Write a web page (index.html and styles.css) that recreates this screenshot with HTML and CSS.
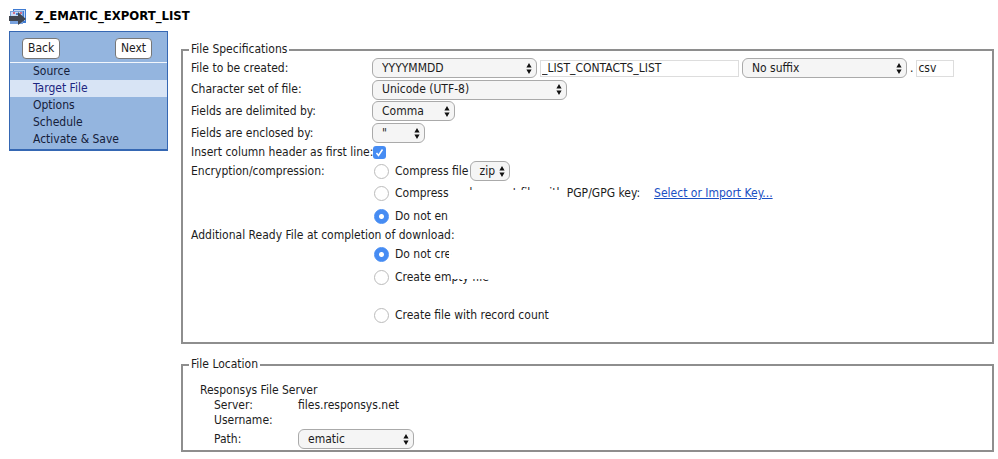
FILE: index.html
```html
<!DOCTYPE html>
<html lang="en">
<head>
<meta charset="utf-8">
<title>Z_EMATIC_EXPORT_LIST</title>
<link rel="stylesheet" href="styles.css">
</head>
<body>
<header class="title-bar">
  <svg class="title-icon" width="18" height="18" viewBox="0 0 18 18" aria-hidden="true">
    <path d="M4 2h13v14H4z" fill="#3f7bd2"/>
    <path d="M1 4h13v13H1z" fill="#79a3e0"/>
    <path d="M2 5h11v5H2z" fill="#c9dbf5"/>
    <path d="M5 3h10v1H5zM15 3h1v11h-1z" fill="#c4d8f5"/>
    <path d="M4 5h2v2H4zM11 5h2v2h-2z" fill="#d0708c"/>
    <path d="M7 6h2v2H7z" fill="#477fd0"/>
    <path d="M0 9h9V5l8 7-8 6v-4H0z" fill="#414650"/>
  </svg>
  <h1 class="title">Z_EMATIC_EXPORT_LIST</h1>
</header>
<div class="layout">
  <nav class="wizard">
    <div class="wizard-buttons">
      <button class="button" type="button">Back</button>
      <button class="button" type="button">Next</button>
    </div>
    <ul class="steps">
      <li><a class="step" href="#source">Source</a></li>
      <li><a class="step step-current" href="#target" aria-current="step">Target File</a></li>
      <li><a class="step" href="#options">Options</a></li>
      <li><a class="step" href="#schedule">Schedule</a></li>
      <li><a class="step" href="#activate">Activate &amp; Save</a></li>
    </ul>
  </nav>
  <form class="panels">
    <fieldset class="panel specs">
      <legend>File Specifications</legend>
      <div class="row">
        <label class="name" for="prefix">File to be created:</label>
        <div class="filename">
          <select class="select select-wide" id="prefix"><option>YYYYMMDD</option></select>
          <input class="text text-name" type="text" aria-label="File name" value="_LIST_CONTACTS_LIST">
          <select class="select select-wide" aria-label="Suffix"><option>No suffix</option></select>
          <span>.</span>
          <input class="text text-ext" type="text" aria-label="Extension" value="csv">
        </div>
      </div>
      <div class="row row-short">
        <label class="name" for="charset">Character set of file:</label>
        <select class="select select-charset" id="charset"><option>Unicode (UTF-8)</option></select>
      </div>
      <div class="row">
        <label class="name" for="delimiter">Fields are delimited by:</label>
        <select class="select select-delimiter" id="delimiter"><option>Comma</option></select>
      </div>
      <div class="row">
        <label class="name" for="enclosure">Fields are enclosed by:</label>
        <select class="select select-enclosure" id="enclosure"><option>"</option></select>
      </div>
      <div class="row row-check">
        <label class="name" for="header-row">Insert column header as first line:</label>
        <input class="check" type="checkbox" id="header-row" checked>
      </div>
      <div class="row">
        <span class="name">Encryption/compression:</span>
        <div class="choice">
          <input class="radio" type="radio" name="enc" id="enc-zip">
          <label for="enc-zip">Compress file</label>
          <select class="select select-zip" aria-label="Compression format"><option>zip</option></select>
        </div>
      </div>
      <div class="choice choice-row">
        <input class="radio" type="radio" name="enc" id="enc-pgp">
        <label for="enc-pgp">Compress<span class="masked masked-bottom"> and encrypt file with</span> PGP/GPG key:</label>
        <a class="key-link" href="#key">Select or Import Key...</a>
      </div>
      <div class="choice choice-row">
        <input class="radio" type="radio" name="enc" id="enc-none" checked>
        <label for="enc-none">Do not en</label>
      </div>
      <div class="subhead">Additional Ready File at completion of download:</div>
      <div class="choice choice-row">
        <input class="radio" type="radio" name="ready" id="ready-none" checked>
        <label for="ready-none">Do not cr<span class="masked masked-right">e</span></label>
      </div>
      <div class="choice choice-row">
        <input class="radio" type="radio" name="ready" id="ready-empty">
        <label for="ready-empty">Create em<span class="masked masked-top">pty file</span></label>
      </div>
      <div class="choice choice-row choice-last">
        <input class="radio" type="radio" name="ready" id="ready-count">
        <label for="ready-count">Create file with record count</label>
      </div>
    </fieldset>
    <fieldset class="panel location">
      <legend>File Location</legend>
      <div class="server-title">Responsys File Server</div>
      <dl class="server">
        <dt>Server:</dt><dd>files.responsys.net</dd>
        <dt>Username:</dt><dd></dd>
        <dt class="path-cell"><label for="path">Path:</label></dt>
        <dd class="path-cell"><select class="select select-path" id="path"><option>ematic</option></select></dd>
      </dl>
    </fieldset>
  </form>
</div>
</body>
</html>
```
FILE: styles.css
```css
* {
  box-sizing: border-box;
}

body {
  margin: 0;
  padding: 7px 4px 0 9px;
  background: #fff;
  color: #1c1c1c;
  font: 12px/15px "DejaVu Sans Condensed", "DejaVu Sans", sans-serif;
}

button, input, select {
  margin: 0;
  color: inherit;
  font: inherit;
}

.title-bar {
  display: flex;
  align-items: center;
  gap: 8px;
  height: 18px;
}

.title {
  margin: 0;
  color: #000;
  font-size: 13px;
  font-weight: bold;
  line-height: 16px;
}

.title-icon {
  display: block;
}

.layout {
  display: flex;
  align-items: flex-start;
  gap: 13px;
  padding-top: 6px;
}

/* Wizard navigation */
.wizard {
  flex: 0 0 159px;
  padding-bottom: 1px;
  border: 1px solid #3567b3;
  border-bottom-width: 2px;
  background: #94b5df;
}

.wizard-buttons {
  display: flex;
  justify-content: space-between;
  padding: 6px 15px 3px 12px;
  border-bottom: 1px solid #f2f6fc;
}

.button {
  height: 21px;
  padding: 0 5px;
  border: 1px solid #777;
  border-radius: 4px;
  background: #fff;
}

.steps {
  margin: 0;
  padding: 0;
  list-style: none;
}

.step {
  display: block;
  padding-left: 23px;
  color: #14203a;
  line-height: 17px;
  text-decoration: none;
}

.step-current {
  background: #d8e4f5;
  color: #1c2680;
}

/* Panels */
.panels {
  flex: 1;
  min-width: 0;
  padding-top: 11px;
}

.panel {
  min-width: 0;
  margin: 0;
  border: 2px solid #8e8e8e;
}

.panel legend {
  margin-left: -2px;
  padding: 0 2px;
}

.specs {
  padding: 0 8px 15px;
}

.location {
  margin-top: 13px;
  padding: 11px 8px 0;
}

.row {
  display: grid;
  grid-template-columns: 181px 1fr;
  align-items: center;
  height: 22px;
}

.row-short {
  height: 21px;
}

.row-check {
  height: 16px;
}

.name {
  white-space: nowrap;
}

.filename {
  display: flex;
  align-items: center;
  gap: 3px;
}

/* Controls */
.select {
  height: 20px;
  padding: 0 18px 0 9px;
  border: 1px solid #aaa;
  border-radius: 6px;
  appearance: none;
  background: #f5f5f5 url("data:image/svg+xml,%3Csvg xmlns='http://www.w3.org/2000/svg' width='6' height='11'%3E%3Cpath d='M3 0l2.6 4.5H.4zM.4 6.5h5.2L3 11z' fill='%23111'/%3E%3C/svg%3E") no-repeat right 4px center;
}

.select-wide {
  width: 165px;
}

.select-charset {
  width: 195px;
}

.select-delimiter {
  width: 83px;
}

.select-enclosure {
  width: 53px;
}

.select-zip {
  width: 40px;
  padding-right: 10px;
  padding-left: 8px;
}

.select-path {
  width: 116px;
}

.text {
  height: 17px;
  padding: 0 1px;
  border: 1px solid #ddd;
  background: #fff;
}

.text-name {
  width: 199px;
}

.text-ext {
  width: 38px;
}

.check {
  width: 13px;
  height: 13px;
  margin-left: 1px;
  border-radius: 3px;
  appearance: none;
}

.check:checked {
  background: #468cf3 url("data:image/svg+xml,%3Csvg xmlns='http://www.w3.org/2000/svg' width='13' height='13'%3E%3Cpath d='M3.5 7l2 2.5L9.5 3.5' fill='none' stroke='white' stroke-width='1.5'/%3E%3C/svg%3E");
}

.radio {
  flex: none;
  width: 15px;
  height: 15px;
  margin-right: 2px;
  border: 1px solid #bbb;
  border-radius: 50%;
  appearance: none;
  background: #fff;
}

.radio:checked {
  border-color: #468cf3;
  background: radial-gradient(circle, #fff 2px, #468cf3 3px);
}

.choice {
  display: flex;
  align-items: center;
  gap: 4px;
  padding-left: 2px;
  white-space: nowrap;
}

.choice .select {
  margin-left: -2px;
}

.choice-row {
  height: 23px;
  margin-left: 181px;
}

.choice-last {
  margin-top: 15px;
}

.key-link {
  margin-left: 10px;
  color: #1a4fc4;
}

/* Partly hidden wording */
.masked {
  position: relative;
}

.masked::after {
  position: absolute;
  top: 0;
  right: 0;
  bottom: 0;
  left: 0;
  background: #fff;
  content: "";
}

.masked-bottom::after {
  top: 4px;
}

.masked-top::after {
  bottom: 5px;
}

.masked-right::after {
  left: 4px;
}

/* File location */
.server-title {
  padding-left: 9px;
}

.server {
  display: grid;
  grid-template-columns: 84px 1fr;
  margin: 0;
  padding-left: 23px;
}

.server dd {
  margin: 0;
}

.path-cell {
  display: flex;
  align-items: center;
  height: 22px;
}
```
